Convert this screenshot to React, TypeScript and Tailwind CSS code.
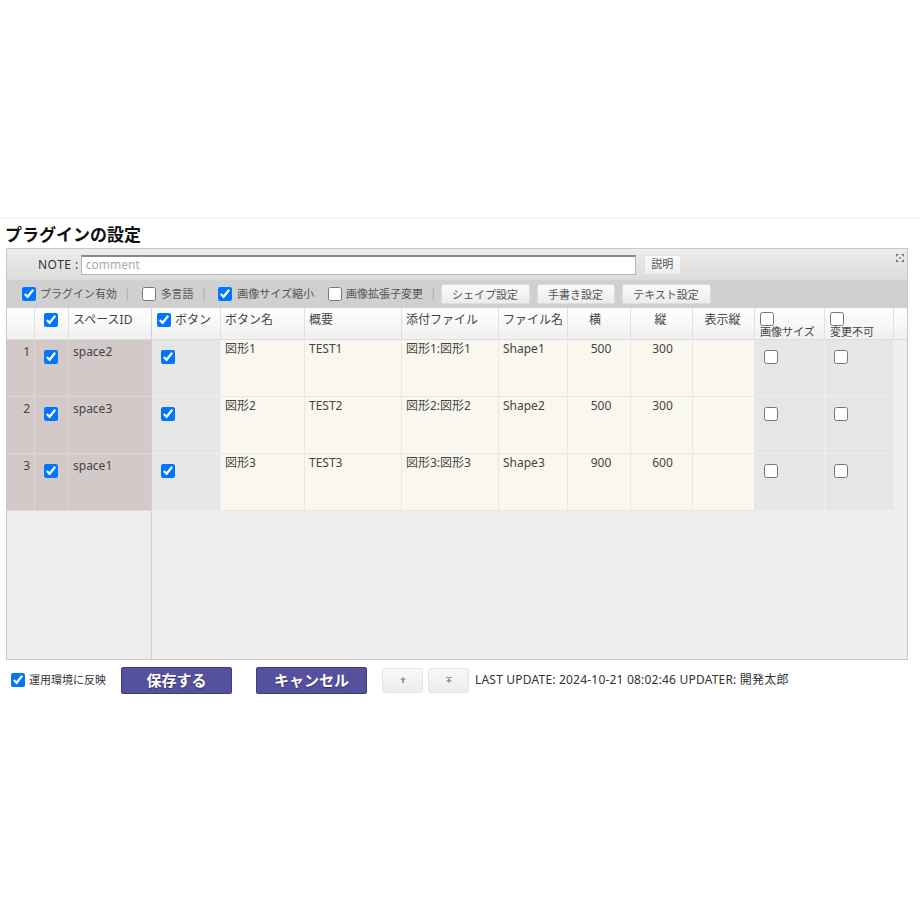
import React from "react";

const FONT = { fontFamily: '"Noto Sans", "Noto Sans CJK JP", sans-serif' };

function Cb({ checked, className = "" }: { checked?: boolean; className?: string }) {
  return (
    <input
      type="checkbox"
      defaultChecked={checked}
      className={"m-0 w-[14px] h-[14px] accent-[#0075ff] shrink-0 " + className}
    />
  );
}

function Sep() {
  return <span className="text-[#aaa] text-[12px] ml-[7px] mr-[4px]">|</span>;
}

function GrayBtn({ children, w }: { children: React.ReactNode; w: string }) {
  return (
    <button
      className={
        "h-[20px] rounded-[2px] border border-[#dcdcdc] bg-gradient-to-b from-[#fafafa] to-[#ececec] text-[11px] text-[#555] leading-none " +
        w
      }
    >
      {children}
    </button>
  );
}

const rows = [
  { n: 1, id: "space2", name: "図形1", sum: "TEST1", file: "図形1:図形1", fname: "Shape1", w: "500", h: "300" },
  { n: 2, id: "space3", name: "図形2", sum: "TEST2", file: "図形2:図形2", fname: "Shape2", w: "500", h: "300" },
  { n: 3, id: "space1", name: "図形3", sum: "TEST3", file: "図形3:図形3", fname: "Shape3", w: "900", h: "600" },
];

const hdrBase = "h-[31px] border-r border-[#e0e0e0] px-[4px] text-[#444] whitespace-nowrap";
const hdr = hdrBase + " pt-[3px] text-[12px] overflow-hidden";
const cream = "h-[57px] bg-[#faf8ee] border-r border-b border-[#ebe7da] px-[4px] pt-[2px] text-[12px] leading-[14px] text-[#444] whitespace-nowrap overflow-hidden";
const gray = "h-[57px] bg-[#e6e6e6] border-r border-b border-[#eeeeee] pl-[9px] pt-[6px]";

export default function App() {
  return (
    <div className="w-[920px] h-[920px] bg-white relative" style={FONT}>
      <div className="h-[219px] border-b border-[#f2f2f2]" />
      <div className="pl-[5px] pt-[5px] h-[29px] text-[17px] font-bold text-[#111] leading-[20px]" style={{ fontFamily: '"Noto Sans CJK JP", sans-serif' }}>
        プラグインの設定
      </div>
      <div className="ml-[6px] w-[902px] border border-[#c8c8c8] flex flex-col">
        {/* NOTE bar */}
        <div className="h-[31px] bg-gradient-to-b from-[#ececec] to-[#dcdcdc] flex items-center relative">
          <span className="ml-[31px] text-[12px] text-[#333] tracking-[0.5px]">NOTE :</span>
          <div className="ml-[2px] w-[555px] h-[20px] bg-white border border-[#b5b5b5] border-t-[#8a8a8a] border-t-2 flex items-center pl-[4px] text-[12px] text-[#aaa]">
            comment
          </div>
          <button className="ml-[8px] h-[20px] w-[37px] rounded-[2px] border border-[#e2e2e2] bg-gradient-to-b from-[#fbfbfb] to-[#eeeeee] text-[11px] text-[#555]">
            説明
          </button>
          <svg className="absolute right-[3px] top-[5px]" width="8" height="8" viewBox="0 0 8 8" fill="#777">
            <path d="M0 0h3L0 3z M8 0v3L5 0z M0 8V5l3 3z M8 8H5l3-3z" />
            <rect x="3" y="3" width="2" height="2" fill="#999" />
          </svg>
        </div>
        {/* toolbar */}
        <div className="h-[28px] bg-[#d0d0d0] flex items-center text-[11px] text-[#555]">
          <Cb checked className="ml-[15px]" />
          <span className="ml-[4px]">プラグイン有効</span>
          <Sep />
          <Cb className="ml-[7px]" />
          <span className="ml-[5px]">多言語</span>
          <Sep />
          <Cb checked className="ml-[7px]" />
          <span className="ml-[5px]">画像サイズ縮小</span>
          <Cb className="ml-[14px]" />
          <span className="ml-[4px]">画像拡張子変更</span>
          <Sep />
          <div className="flex gap-[7px]">
            <GrayBtn w="w-[89px]">シェイプ設定</GrayBtn>
            <GrayBtn w="w-[78px]">手書き設定</GrayBtn>
            <GrayBtn w="w-[89px]">テキスト設定</GrayBtn>
          </div>
        </div>
        {/* table */}
        <div className="h-[351px] flex bg-[#eeeeee]">
          {/* left frozen */}
          <div className="w-[145px] border-r border-[#cfcfcf] flex flex-col">
            <div className="grid grid-cols-[28px_34px_83px] bg-gradient-to-b from-[#ffffff] to-[#f0f0f0] border-b border-[#dddddd]">
              <div className={hdr} />
              <div className={hdr + " pl-[9px] pt-[5px]"}>
                <Cb checked />
              </div>
              <div className={hdr + " border-r-0"}>スペースID</div>
            </div>
            {rows.map((r) => (
              <div key={r.n} className="grid grid-cols-[28px_34px_83px] bg-[#d3c9c8]">
                <div className="h-[57px] border-r border-b border-[#ddd6d5] text-right pr-[4px] pt-[3px] text-[12px] text-[#444]">{r.n}</div>
                <div className="h-[57px] border-r border-b border-[#ddd6d5] pl-[9px] pt-[6px]">
                  <Cb checked />
                </div>
                <div className="h-[57px] border-b border-[#ddd6d5] px-[4px] pt-[3px] text-[12px] text-[#444]">{r.id}</div>
              </div>
            ))}
          </div>
          {/* right scroll area */}
          <div className="flex-1 flex flex-col">
            <div className="grid grid-cols-[69px_84px_97px_97px_69px_63px_62px_62px_70px_69px_1fr] bg-gradient-to-b from-[#ffffff] to-[#f0f0f0] border-b border-[#dddddd]">
              <div className={hdr + " flex items-start gap-[4px] pl-[5px] pt-[5px]"}>
                <Cb checked />
                <span className="-mt-[2px]">ボタン</span>
              </div>
              <div className={hdr}>ボタン名</div>
              <div className={hdr}>概要</div>
              <div className={hdr}>添付ファイル</div>
              <div className={hdr}>ファイル名</div>
              <div className={hdr + " text-center pr-[12px]"}>横</div>
              <div className={hdr + " text-center pr-[6px]"}>縦</div>
              <div className={hdr + " text-center pr-[6px]"}>表示縦</div>
              <div className={hdrBase + " pl-[5px] pt-[4px] leading-[12px] text-[11px] flex flex-col items-start"}>
                <Cb />
                <span>画像サイズ</span>
              </div>
              <div className={hdrBase + " pl-[5px] pt-[4px] leading-[12px] text-[11px] flex flex-col items-start"}>
                <Cb />
                <span>変更不可</span>
              </div>
              <div className="h-[31px]" />
            </div>
            {rows.map((r) => (
              <div key={r.n} className="grid grid-cols-[69px_84px_97px_97px_69px_63px_62px_62px_70px_69px_1fr]">
                <div className={gray + " pl-[9px] pt-[6px]"}>
                  <Cb checked />
                </div>
                <div className={cream}>{r.name}</div>
                <div className={cream}>{r.sum}</div>
                <div className={cream}>{r.file}</div>
                <div className={cream}>{r.fname}</div>
                <div className={cream + " text-center pr-[0px]"}>{r.w}</div>
                <div className={cream + " text-center pr-[2px]"}>{r.h}</div>
                <div className={cream} />
                <div className={gray}>
                  <Cb />
                </div>
                <div className={gray}>
                  <Cb />
                </div>
                <div className="h-[57px]" />
              </div>
            ))}
          </div>
        </div>
      </div>
      {/* bottom bar */}
      <div className="mt-[6px] flex items-center h-[28px] text-[11px] text-[#333]">
        <Cb checked className="ml-[11px]" />
        <span className="ml-[4px]">運用環境に反映</span>
        <button className="ml-[15px] w-[111px] h-[27px] bg-[#55519f] border border-[#3f3c80] rounded-[2px] text-white text-[15px] font-bold [text-shadow:0_1px_1px_rgba(0,0,0,0.4)]">
          保存する
        </button>
        <button className="ml-[24px] w-[111px] h-[27px] bg-[#55519f] border border-[#3f3c80] rounded-[2px] text-white text-[15px] font-bold [text-shadow:0_1px_1px_rgba(0,0,0,0.4)]">
          キャンセル
        </button>
        <button className="ml-[15px] w-[41px] h-[25px] rounded-[3px] border border-[#e4e4e4] bg-gradient-to-b from-[#f8f8f8] to-[#ececec] flex items-center justify-center">
          <svg width="6" height="6" viewBox="0 0 6 6" fill="#999">
            <path d="M3 0L6 3H4V6H2V3H0z" />
          </svg>
        </button>
        <button className="ml-[5px] w-[41px] h-[25px] rounded-[3px] border border-[#e4e4e4] bg-gradient-to-b from-[#f8f8f8] to-[#ececec] flex items-center justify-center">
          <svg width="6" height="6" viewBox="0 0 6 6" fill="#999">
            <path d="M0 0H6V1H0z M3 6L0 3H2V1.5H4V3H6z" />
          </svg>
        </button>
        <span className="ml-[6px] text-[12px] tracking-[0.2px]">LAST UPDATE: 2024-10-21 08:02:46 UPDATER: 開発太郎</span>
      </div>
    </div>
  );
}
